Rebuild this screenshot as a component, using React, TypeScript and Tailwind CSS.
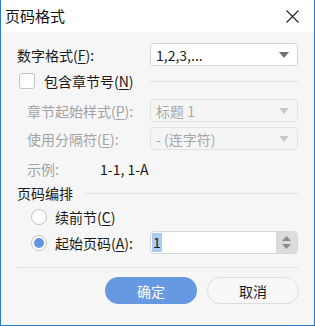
import React from "react";

const font = { fontFamily: '"Noto Sans CJK SC", "Noto Sans", sans-serif' };

function Arrow({ color }: { color: string }) {
  return (
    <svg width="10" height="6" viewBox="0 0 10 6">
      <polygon points="0,0 10,0 5,6" fill={color} />
    </svg>
  );
}

function Select({ text, disabled }: { text: string; disabled?: boolean }) {
  return (
    <div
      className={
        "flex-1 h-[23px] rounded-[4px] border flex items-center justify-between pl-[5px] pr-[8px] " +
        (disabled ? "border-[#e2e2e2] bg-[#f5f5f5] text-[#a8a8a8]" : "border-[#d2d2d2] bg-white text-[#1a1a1a]")
      }
    >
      <span className="leading-[20px]">{text}</span>
      <Arrow color={disabled ? "#c8c8c8" : "#707070"} />
    </div>
  );
}

export default function App() {
  return (
    <div
      className="w-[315px] h-[326px] bg-[#f6f6f6] border-x border-b border-[#2b79c2] flex flex-col text-[14px] text-[#1a1a1a]"
      style={font}
    >
      <div className="h-[32px] bg-white flex items-center justify-between pl-[4px] pr-[15px] shrink-0">
        <span className="text-[15px] leading-[20px] text-[#111]">页码格式</span>
        <svg width="13" height="13" viewBox="0 0 13 13">
          <path d="M0.5 0.5 L12.5 12.5 M12.5 0.5 L0.5 12.5" stroke="#222" strokeWidth="1.1" />
        </svg>
      </div>
      <div className="flex flex-col pl-[16px] pr-[16px]">
        <div className="flex items-center mt-[11px]">
          <div className="w-[133px] leading-[20px]">
            数字格式(<u className="underline-offset-2">F</u>):
          </div>
          <Select text="1,2,3,..." />
        </div>
        <div className="flex items-center mt-[7px] h-[16px]">
          <div className="w-[133px] flex items-center">
            <div className="ml-[2px] w-[16px] h-[16px] rounded-[3px] border border-[#c4c4c4] bg-white" />
            <span className="ml-[9px] leading-[20px]">
              包含章节号(<u className="underline-offset-2">N</u>)
            </span>
          </div>
          <div className="flex-1 h-px bg-[#e2e2e2]" />
        </div>
        <div className="flex items-center mt-[10px] text-[#a3a3a3]">
          <div className="w-[133px] pl-[10px] leading-[20px]">
            章节起始样式(<u className="underline-offset-2">P</u>):
          </div>
          <Select text="标题 1" disabled />
        </div>
        <div className="flex items-center mt-[5px] text-[#a3a3a3]">
          <div className="w-[133px] pl-[10px] leading-[20px]">
            使用分隔符(<u className="underline-offset-2">E</u>):
          </div>
          <Select text="- (连字符)" disabled />
        </div>
        <div className="flex items-center mt-[9px] h-[20px]">
          <div className="w-[83px] pl-[10px] text-[#a3a3a3] leading-[20px]">示例:</div>
          <span className="leading-[20px]">1-1, 1-A</span>
        </div>
        <div className="flex items-center mt-[4px] h-[20px]">
          <span className="leading-[20px] w-[67px]">页码编排</span>
          <div className="flex-1 h-px bg-[#e2e2e2]" />
        </div>
        <div className="flex items-center mt-[6px] h-[16px] pl-[14px]">
          <div className="w-[16px] h-[16px] rounded-full border border-[#c4c4c4] bg-white" />
          <span className="ml-[8px] leading-[20px]">
            续前节(<u className="underline-offset-2">C</u>)
          </span>
        </div>
        <div className="flex items-center mt-[6px] h-[23px]">
          <div className="w-[133px] pl-[14px] flex items-center">
            <div className="w-[16px] h-[16px] rounded-full border border-[#c4c4c4] bg-white flex items-center justify-center">
              <div className="w-[10px] h-[10px] rounded-full bg-[#6194e2]" />
            </div>
            <span className="ml-[8px] leading-[20px]">
              起始页码(<u className="underline-offset-2">A</u>):
            </span>
          </div>
          <div className="flex-1 h-[23px] rounded-[4px] border border-[#d6d6d6] bg-white flex overflow-hidden">
            <div className="flex-1 flex items-center pl-[1px]">
              <span className="bg-[#a9cdf2] leading-[19px] px-[1px] text-[#1a1a1a]">1</span>
            </div>
            <div className="w-[21px] bg-[#dcdcdc] flex flex-col items-center justify-center gap-[3px]">
              <svg width="9" height="5" viewBox="0 0 9 5">
                <polygon points="0,5 9,5 4.5,0" fill="#8a8a8a" />
              </svg>
              <svg width="9" height="5" viewBox="0 0 9 5">
                <polygon points="0,0 9,0 4.5,5" fill="#8a8a8a" />
              </svg>
            </div>
          </div>
        </div>
        <div className="mt-[13px] h-px bg-[#e2e2e2]" />
        <div className="flex justify-end mt-[9px] gap-[10px] -mr-[1px]">
          <div className="w-[92px] h-[27px] rounded-full bg-[#6699e2] text-white flex items-center justify-center leading-[20px]">
            确定
          </div>
          <div className="w-[92px] h-[27px] rounded-full border border-[#dcdcdc] bg-[#f8f8f8] flex items-center justify-center leading-[20px]">
            取消
          </div>
        </div>
      </div>
    </div>
  );
}
